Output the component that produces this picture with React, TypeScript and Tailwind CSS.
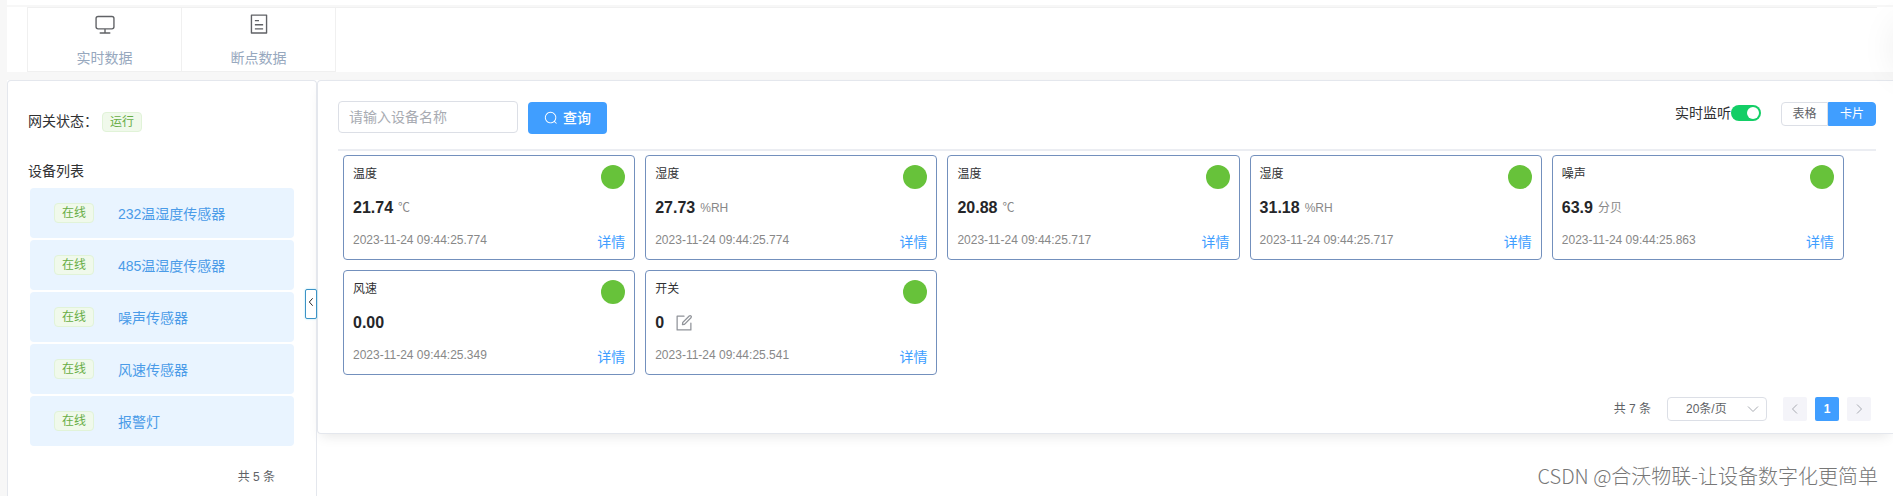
import React, { useState } from 'react';
import clsx from 'clsx';

const devices = ['232温湿度传感器', '485温湿度传感器', '噪声传感器', '风速传感器', '报警灯'];

const tabs = [
  {
    label: '实时数据',
    path: 'M544 768v128h192a32 32 0 1 1 0 64H288a32 32 0 1 1 0-64h192V768H192A128 128 0 0 1 64 640V256a128 128 0 0 1 128-128h640a128 128 0 0 1 128 128v384a128 128 0 0 1-128 128H544zM192 192a64 64 0 0 0-64 64v384a64 64 0 0 0 64 64h640a64 64 0 0 0 64-64V256a64 64 0 0 0-64-64H192z',
  },
  {
    label: '断点数据',
    path: 'M192 128v768h640V128H192zm-32-64h704a32 32 0 0 1 32 32v832a32 32 0 0 1-32 32H160a32 32 0 0 1-32-32V96a32 32 0 0 1 32-32zm160 448h384v64H320v-64zm0-192h192v64H320v-64zm0 384h384v64H320v-64z',
  },
];

const SEARCH =
  'm795.904 750.72 124.992 124.928a32 32 0 0 1-45.248 45.248L750.656 795.904a416 416 0 1 1 45.248-45.248zM480 832a352 352 0 1 0 0-704 352 352 0 0 0 0 704z';
const EDIT =
  'M832 512a32 32 0 1 1 64 0v352a32 32 0 0 1-32 32H160a32 32 0 0 1-32-32V160a32 32 0 0 1 32-32h352a32 32 0 0 1 0 64H192v640h640V512zM469.952 554.24l52.8-7.552L847.104 222.4a32 32 0 1 0-45.248-45.248L477.44 501.44l-7.552 52.8zm422.4-422.4a96 96 0 0 1 0 135.808l-331.84 331.84a32 32 0 0 1-18.112 9.088L436.8 623.68a32 32 0 0 1-36.224-36.224l15.104-105.6a32 32 0 0 1 9.024-18.112l331.904-331.84a96 96 0 0 1 135.744 0z';

type Sensor = { name: string; value: string; unit?: string; time: string; editable?: boolean };

const sensors: Sensor[] = [
  { name: '温度', value: '21.74', unit: '℃', time: '2023-11-24 09:44:25.774' },
  { name: '湿度', value: '27.73', unit: '%RH', time: '2023-11-24 09:44:25.774' },
  { name: '温度', value: '20.88', unit: '℃', time: '2023-11-24 09:44:25.717' },
  { name: '湿度', value: '31.18', unit: '%RH', time: '2023-11-24 09:44:25.717' },
  { name: '噪声', value: '63.9', unit: '分贝', time: '2023-11-24 09:44:25.863' },
  { name: '风速', value: '0.00', time: '2023-11-24 09:44:25.349' },
  { name: '开关', value: '0', time: '2023-11-24 09:44:25.541', editable: true },
];

function Icon({ path, className }: { path: string; className?: string }) {
  return (
    <svg viewBox="0 0 1024 1024" fill="currentColor" className={className} aria-hidden="true">
      <path d={path} />
    </svg>
  );
}

function Chevron({ d, className }: { d: string; className?: string }) {
  return (
    <svg viewBox="0 0 12 12" fill="none" stroke="currentColor" className={className} aria-hidden="true">
      <path d={d} />
    </svg>
  );
}

function Tag({ children }: { children: React.ReactNode }) {
  return (
    <span className="flex h-5 w-10 shrink-0 items-center justify-center rounded border border-[#e1f3d8] bg-[#f0f9eb] text-xs leading-4 text-[#67ad45]">
      {children}
    </span>
  );
}

function SensorCard({ sensor }: { sensor: Sensor }) {
  return (
    <article className="flex h-[105px] flex-col rounded border border-[#7390bd] px-[9px] pt-[9px]">
      <div className="flex items-start justify-between">
        <h3 className="text-xs leading-[18px] text-[#303133]">{sensor.name}</h3>
        <span className="size-6 rounded-full bg-[#67c23a]" />
      </div>
      <div className="mt-[9px] flex h-5 items-center">
        <span className="text-base leading-5 font-bold text-[#252629]">{sensor.value}</span>
        {sensor.unit && <span className="ml-[5px] text-xs leading-4 text-[#888]">{sensor.unit}</span>}
        {sensor.editable && (
          <button type="button" aria-label="编辑" className="ml-2.5 text-[#909399]">
            <Icon path={EDIT} className="size-5" />
          </button>
        )}
      </div>
      <div className="mt-3 flex items-start justify-between">
        <time className="text-xs leading-5 text-[#888]">{sensor.time}</time>
        <a href="#detail" className="text-sm leading-6 text-[#409eff]">
          详情
        </a>
      </div>
    </article>
  );
}

export default function App() {
  const [listening, setListening] = useState(true);
  const [view, setView] = useState('card');
  const [keyword, setKeyword] = useState('');

  return (
    <div className="relative flex min-h-screen flex-col overflow-hidden bg-[#f7f7f7] pl-[7px] font-['Liberation_Sans','Noto_Sans_CJK_SC',sans-serif] text-sm text-[#303133]">
      <div className="mb-0.5 h-[5px] bg-white" />

      {/* Top tabs */}
      <nav className="bg-white pr-4 pl-5">
        <div className="flex border-t border-l border-[#f0f0f0]">
          {tabs.map((tab) => (
            <a
              key={tab.label}
              href="#tab"
              className="flex h-16 w-[154px] flex-col items-center border-r border-b border-[#f0f0f0] pt-[5px] text-[#97a8be]"
            >
              <Icon path={tab.path} className="size-[22px] text-[#606266]" />
              <span className="mt-[13px] leading-5">{tab.label}</span>
            </a>
          ))}
        </div>
      </nav>

      <div className="mt-2 flex flex-1 bg-white">
        {/* Gateway and device list */}
        <aside className="relative w-[310px] shrink-0 rounded-t border border-b-0 border-[#e4e7ed] pt-[31px] pr-[22px] pl-5">
          <div className="flex items-start">
            <span className="leading-[18px]">网关状态：</span>
            <span className="ml-1">
              <Tag>运行</Tag>
            </span>
          </div>
          <h2 className="mt-[29px] leading-5">设备列表</h2>
          <ul className="mt-[7px] ml-0.5 flex flex-col gap-0.5">
            {devices.map((name) => (
              <li key={name}>
                <a href="#device" className="flex h-[50px] items-center gap-6 rounded bg-[#e9f4ff] pl-6 text-[#4a9be8]">
                  <Tag>在线</Tag>
                  <span className="pt-0.5 leading-5">{name}</span>
                </a>
              </li>
            ))}
          </ul>
          <p className="mt-[21px] mr-[19px] text-right text-xs leading-5 text-[#606266]">共 5 条</p>
          <button
            type="button"
            aria-label="收起"
            className="absolute top-[208px] -right-px flex h-[30px] w-3 items-center justify-center rounded-xs border border-[#3c93c6] bg-white pb-1 text-black shadow-[0_0_2px_#9fe0f5]"
          >
            <Chevron d="M8 1.5 4 6 8 10.5" className="size-2.5 shrink-0" />
          </button>
        </aside>

        {/* Sensor panel */}
        <main className="min-w-0 flex-1">
          <section className="rounded-l border border-r-0 border-[#e4e7ed] bg-white pt-5 pr-[17px] pb-3 pl-5 shadow-[0_6px_12px_-4px_rgba(0,0,0,0.1)]">
            <div className="flex items-start justify-between">
              <form className="flex items-end gap-2.5" onSubmit={(e) => e.preventDefault()}>
                <input
                  type="text"
                  aria-label="设备名称"
                  placeholder="请输入设备名称"
                  value={keyword}
                  onChange={(e) => setKeyword(e.target.value)}
                  className="mb-px h-8 w-[180px] rounded border border-[#dcdfe6] px-2.5 text-sm placeholder:text-[#a8abb2]"
                />
                <button
                  type="submit"
                  className="flex h-8 w-[79px] items-center justify-center gap-[5px] rounded bg-[#409eff] font-medium text-white"
                >
                  <Icon path={SEARCH} className="size-3.5" />
                  <span className="leading-5">查询</span>
                </button>
              </form>

              <div className="flex items-start pt-px">
                <label className="relative flex h-[22px] items-center">
                  <span className="leading-5">实时监听</span>
                  <input
                    type="checkbox"
                    role="switch"
                    checked={listening}
                    onChange={(e) => setListening(e.target.checked)}
                    className="peer sr-only"
                  />
                  <span className="flex h-4 w-[30px] items-center rounded-full bg-[#dcdfe6] px-0.5 peer-checked:justify-end peer-checked:bg-[#13ce66]">
                    <span className="size-3 rounded-full bg-white" />
                  </span>
                </label>
                <fieldset className="ml-5 flex text-xs leading-4">
                  {[
                    { id: 'table', label: '表格' },
                    { id: 'card', label: '卡片' },
                  ].map((item) => (
                    <label
                      key={item.id}
                      className={clsx(
                        'relative flex h-6 items-center justify-center border first:rounded-l last:rounded-r',
                        view === item.id
                          ? 'w-12 border-[#409eff] bg-[#409eff] text-white'
                          : 'w-[47px] border-[#dcdfe6] bg-white text-[#606266]'
                      )}
                    >
                      <input
                        type="radio"
                        name="view"
                        checked={view === item.id}
                        onChange={() => setView(item.id)}
                        className="sr-only"
                      />
                      {item.label}
                    </label>
                  ))}
                </fieldset>
              </div>
            </div>

            <hr className="mt-[15px] border-t-2 border-[#ebedf2]" />

            <div className="mt-1 mr-8 ml-[5px] grid grid-cols-5 gap-2.5">
              {sensors.map((sensor, i) => (
                <SensorCard key={i} sensor={sensor} />
              ))}
            </div>

            <div className="mt-[22px] mr-[5px] flex items-center justify-end text-xs text-[#606266]">
              <span className="leading-5">共 7 条</span>
              <div className="relative ml-4">
                <select
                  aria-label="每页条数"
                  className="block h-6 w-[100px] appearance-none rounded border border-[#dcdfe6] bg-white pl-[18px]"
                >
                  <option>20条/页</option>
                  <option>50条/页</option>
                </select>
                <Chevron d="M1 3.5 6 8.5 11 3.5" className="pointer-events-none absolute top-1.5 right-2 size-3 text-[#a8abb2]" />
              </div>
              <div className="ml-4 flex gap-2">
                <button type="button" aria-label="上一页" className="flex size-6 items-center justify-center rounded-xs bg-[#f4f4f9] text-[#a8abb2]">
                  <Chevron d="M8 1.5 3.5 6 8 10.5" className="size-3" />
                </button>
                <button type="button" className="size-6 rounded-xs bg-[#409eff] font-bold text-white">
                  1
                </button>
                <button type="button" aria-label="下一页" className="flex size-6 items-center justify-center rounded-xs bg-[#f4f4f9] text-[#a8abb2]">
                  <Chevron d="M4 1.5 8.5 6 4 10.5" className="size-3" />
                </button>
              </div>
            </div>
          </section>
        </main>
      </div>

      {/* Edge of the hidden drawer handle */}
      <div className="pointer-events-none absolute top-7 -right-12 h-10 w-10 shadow-[0_0_40px_rgba(0,0,0,0.12)]" />

      <p className="pointer-events-none absolute right-[15px] bottom-1.5 font-['Noto_Sans_CJK_SC',sans-serif] text-xl leading-7 font-light text-[#777]">
        CSDN @合沃物联-让设备数字化更简单
      </p>
    </div>
  );
}
